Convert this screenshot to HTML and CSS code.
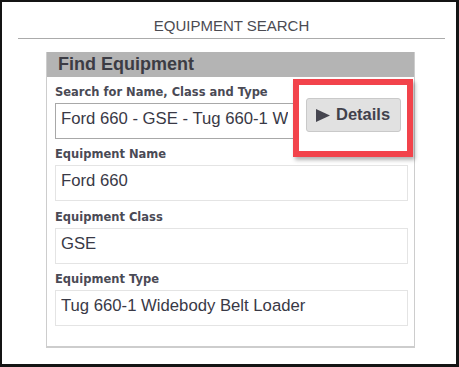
FILE: index.html
```html
<!DOCTYPE html>
<html lang="en">
<head>
    <meta charset="UTF-8">
    <title>Equipment Search</title>
    <link rel="stylesheet" href="styles.css">
</head>
<body>
    <div class="frame">
        <div class="page-title">EQUIPMENT SEARCH</div>

        <div class="panel">
            <div class="panel-header">Find Equipment</div>
            <div class="panel-body">
                <div class="search-row">
                    <div class="field">
                        <label for="search">Search for Name, Class and Type</label>
                        <input type="text" id="search" class="combo" value="Ford 660 - GSE - Tug 660-1 Widebody Belt Loader">
                    </div>
                    <button type="button" class="details-btn">
                        <svg width="14" height="13" viewBox="0 0 14 13"><polygon points="0,0 14,6.5 0,13" fill="#45454f"/></svg>
                        <span>Details</span>
                    </button>
                </div>

                <div class="field">
                    <label for="eqName">Equipment Name</label>
                    <input type="text" id="eqName" value="Ford 660" readonly>
                </div>
                <div class="field">
                    <label for="eqClass">Equipment Class</label>
                    <input type="text" id="eqClass" value="GSE" readonly>
                </div>
                <div class="field">
                    <label for="eqType">Equipment Type</label>
                    <input type="text" id="eqType" value="Tug 660-1 Widebody Belt Loader" readonly>
                </div>
            </div>
            <!-- callout drawn over the details button -->
            <div class="callout"></div>
        </div>
    </div>
</body>
</html>
```

FILE: styles.css
```css
body { margin: 0; font-family: 'Liberation Sans', Arial, sans-serif; background: #fff; }
.frame {
    width: 459px;
    height: 367px;
    box-sizing: border-box;
    border: solid #141414;
    border-width: 2px 3px 3px 2px;
    background: #fff;
}
.page-title {
    margin: 0 11px 0 16px;
    padding: 15px 0 4px;
    font-size: 15px;
    line-height: 17px;
    text-align: center;
    color: #4b4b52;
    border-bottom: 1px solid #ababab;
}
.panel {
    position: relative;
    width: 369px;
    margin: 13px 0 0 44px;
    box-sizing: border-box;
    border: 1px solid #cdcdcd;
    border-top: none;
    border-bottom-width: 2px;
}
.panel-header {
    height: 25px;
    line-height: 25px;
    padding-left: 11px;
    background-color: #b4b4b4;
    font-size: 18px;
    font-weight: bold;
    color: #3c3c44;
}
.panel-body {
    padding: 7.5px 6px 20px 8px;
}
.field { display: flex; flex-direction: column; }
.field + .field { margin-top: 8.5px; }
.search-row + .field { margin-top: 8.5px; }
label {
    font-family: 'DejaVu Sans', Verdana, sans-serif;
    font-size: 11.5px;
    line-height: 14px;
    font-weight: bold;
    color: #4a4a55;
    margin-bottom: 4px;
    white-space: nowrap;
}
input {
    height: 36px;
    box-sizing: border-box;
    padding: 0 5px 4px;
    border: 1px solid #e4e4e4;
    font-family: 'Liberation Sans', Arial, sans-serif;
    font-size: 16.7px;
    color: #393946;
    background: #fff;
    outline: none;
}
input.combo {
    width: 239px;
    border-color: #a8a8a8;
}
.search-row {
    display: flex;
    align-items: flex-end;
}
.details-btn {
    display: flex;
    align-items: center;
    gap: 6px;
    width: 95px;
    height: 34px;
    margin: 0 0 6.5px 12px;
    padding: 0 0 0 9px;
    box-sizing: border-box;
    background-color: #e1e1e1;
    border: 1px solid #c9c9c9;
    border-radius: 3px;
    font-family: 'Liberation Sans', Arial, sans-serif;
    font-size: 16.5px;
    font-weight: bold;
    color: #41414c;
    cursor: pointer;
}
.details-btn span { margin-bottom: 1px; }
.callout {
    position: absolute;
    left: 246px;
    top: 27px;
    width: 120px;
    height: 78px;
    box-sizing: border-box;
    border: 6px solid #f2434b;
    box-shadow: 2px 3px 4px rgba(0,0,0,0.3);
    pointer-events: none;
}
```
